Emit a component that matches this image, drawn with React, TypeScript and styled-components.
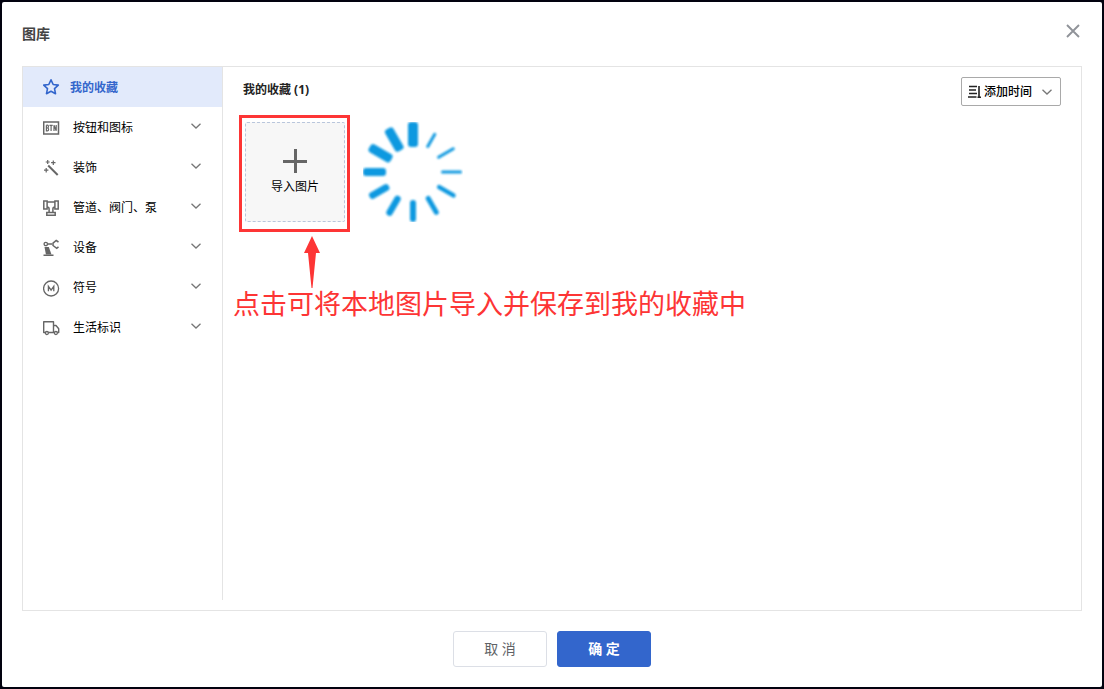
import React from "react";
import styled, { createGlobalStyle } from "styled-components";

const GlobalStyle = createGlobalStyle`
  * { box-sizing: border-box; }
  body {
    margin: 0;
    background: #02020f;
    font-family: "Noto Sans", "Noto Sans CJK SC", sans-serif;
    font-size: 12px;
    line-height: 20px;
    color: #000;
  }
  button, select { font: inherit; color: inherit; }
`;

const Screen = styled.div`
  display: flex;
  min-height: 100vh;
  padding: 2px;
`;

const Dialog = styled.section`
  flex: 1;
  display: flex;
  flex-direction: column;
  padding: 0 20px 20px;
  background: #fff;
  border-radius: 2px;
`;

const DialogHeader = styled.header`
  display: flex;
  align-items: center;
  justify-content: space-between;
  height: 64px;
`;

const DialogTitle = styled.h1`
  margin: 0;
  font-size: 14px;
  font-weight: 700;
  color: #444;
`;

const CloseButton = styled.button`
  display: flex;
  padding: 2px;
  margin-bottom: 6px;
  border: 0;
  background: none;
  color: #909399;
  cursor: pointer;
`;

const Panel = styled.div`
  flex: 1;
  display: flex;
  padding-bottom: 10px;
  border: 1px solid #e4e4e4;
`;

const Sidebar = styled.nav`
  flex: 0 0 200px;
  border-right: 1px solid #e4e4e4;
`;

const CategoryButton = styled.button<{ $active?: boolean }>`
  display: flex;
  align-items: center;
  gap: ${(p) => (p.$active ? 10 : 13)}px;
  width: 100%;
  height: 40px;
  padding: 0 20px;
  border: 0;
  text-align: left;
  cursor: pointer;
  background: ${(p) => (p.$active ? "#e2eafb" : "transparent")};
  color: ${(p) => (p.$active ? "#3366cc" : "#000")};
  font-weight: ${(p) => (p.$active ? 700 : 400)};
`;

const CategoryIcon = styled.span<{ $active?: boolean }>`
  display: flex;
  padding-top: ${(p) => (p.$active ? 0 : 2)}px;
  color: ${(p) => (p.$active ? "#3366cc" : "#666")};
`;

const CategoryLabel = styled.span`
  flex: 1;
  padding-top: 2px;
`;

const ChevronSlot = styled.span`
  display: flex;
  padding-bottom: 2px;
`;

const Main = styled.main`
  flex: 1;
  min-width: 0;
  padding: 10px 20px 0;
`;

const MainHeader = styled.div`
  display: flex;
  align-items: flex-start;
  justify-content: space-between;
`;

const SectionTitle = styled.h2`
  margin: 0;
  padding-top: 3px;
  font-size: 12px;
  font-weight: 700;
  color: #222;
`;

const SortBox = styled.label`
  display: flex;
  align-items: center;
  gap: 3px;
  width: 100px;
  height: 29px;
  padding: 0 7px 0 6px;
  border: 1px solid #a9a9a9;
  border-radius: 2px;
`;

const SortSelect = styled.select`
  flex: 1;
  min-width: 0;
  padding: 0;
  border: 0;
  appearance: none;
  background: none;
  font-weight: 500;
  line-height: 20px;
`;

const Gallery = styled.div`
  position: relative;
  display: flex;
  gap: 18px;
  padding: 16px 2px 0;
`;

const ImportTile = styled.button`
  display: flex;
  flex-direction: column;
  align-items: center;
  justify-content: center;
  gap: 4px;
  width: 100px;
  height: 100px;
  padding: 2px 0 0;
  border: 1px dashed #b9c6dc;
  border-radius: 2px;
  background: #f7f7f7;
  cursor: pointer;
`;

const Highlight = styled.div`
  position: absolute;
  top: 9px;
  left: -4px;
  width: 111px;
  height: 117px;
  border: 3px solid #fd3535;
  pointer-events: none;
`;

const Callout = styled.div`
  position: absolute;
  top: 130px;
  left: -10px;
  color: #fd3535;
  font-size: 27px;
  line-height: 32px;
  white-space: nowrap;
  pointer-events: none;
`;

const CalloutArrow = styled.svg`
  display: block;
  margin-left: 71px;
`;

const DialogFooter = styled.footer`
  display: flex;
  justify-content: center;
  gap: 10px;
  padding-top: 20px;
`;

const FooterButton = styled.button<{ $primary?: boolean }>`
  width: 94px;
  height: 36px;
  padding: 0;
  border: 1px solid ${(p) => (p.$primary ? "#3366cc" : "#dcdfe6")};
  border-radius: 3px;
  background: ${(p) => (p.$primary ? "#3366cc" : "#fff")};
  color: ${(p) => (p.$primary ? "#fff" : "#606266")};
  font-size: 14px;
  font-weight: ${(p) => (p.$primary ? 700 : 400)};
  cursor: pointer;
`;

const Chevron = () => (
  <svg width="12" height="8" viewBox="0 0 12 8" fill="none" stroke="#777" strokeWidth="1.3" aria-hidden="true">
    <path d="M1.5 1.8 6 6l4.500-4.200" />
  </svg>
);

const Icon = ({ children }: { children: React.ReactNode }) => (
  <svg width="17" height="18" viewBox="0.500 0 17 18" fill="none" stroke="currentColor" strokeWidth="1.3" aria-hidden="true">
    {children}
  </svg>
);

const StarIcon = () => (
  <Icon>
    <path strokeWidth="1.600" strokeLinejoin="round" d="m8.500 1.800 2.200 4.700 5.100.600-3.800 3.500 1 5.100-4.500-2.500-4.500 2.500 1-5.100L1.200 7.100l5.100-.600z" />
  </Icon>
);

const ButtonIcon = () => (
  <Icon>
    <rect x="1.200" y="3" width="14.800" height="12" strokeWidth="1.500" />
    <path strokeWidth="1.200" d="M3.900 6.200v5.600h1c1.600 0 1.600-2.800 0-2.800h-1M4.900 9c1.400 0 1.400-2.800 0-2.800h-1M7 6.300h3.200M8.600 6.300v5.700M11.500 12V6.200l2.200 5.600V6" />
  </Icon>
);

const WandIcon = () => (
  <Icon>
    <path strokeWidth="2" d="m5.700 6.500 9.500 9.500" />
    <path strokeWidth="1.200" d="M5.200 1v4M3.200 3h4M10.800 1.500v4.400M8.600 3.700H13M3.700 9v4.400M1.500 11.200h4.400" />
  </Icon>
);

const PipeIcon = () => (
  <Icon>
    <path strokeWidth="1.500" d="M1.300 2h3.300v8H1.300zM12.400 2h3.300v8h-3.300zM4.600 3h7.800M4.600 8c1.200 0 2 .6 2 2v3.500M12.400 8c-1.200 0-2 .6-2 2v3.500M4.300 13.500h8.400v2.800H4.300z" />
  </Icon>
);

const RobotIcon = () => (
  <Icon>
    <circle cx="3.300" cy="5" r="1.700" />
    <path fill="currentColor" stroke="none" d="M2 8h4.300l2.700 7.500H3.400z" />
    <path strokeWidth="1.500" d="M1 16.300h10M5.200 5h4.300M16 7.800l-1.800 1.500-3.700-2.800V4.200l3.200-2.700L16 3" />
  </Icon>
);

const SymbolIcon = () => (
  <Icon>
    <circle cx="8.600" cy="9.500" r="7.500" strokeWidth="1.300" />
    <path d="M5.900 12.300V7.400l2.700 3.800 2.700-3.800v4.900" />
  </Icon>
);

const TruckIcon = () => (
  <Icon>
    <path strokeWidth="1.400" strokeLinejoin="round" d="M3 13.500H1.200V2.700h9.800v10.800H5.800M11 6.500h2.500l2.700 3.200v3.800h-1.400M11 13.500h1" />
    <circle cx="4.400" cy="14" r="1.500" />
    <circle cx="13.400" cy="14" r="1.500" />
  </Icon>
);

const SortIcon = () => (
  <svg width="13" height="14" viewBox="0 0 13 14" fill="none" stroke="#222" strokeWidth="1.600" aria-hidden="true">
    <path d="M1 1.500h8M1 5h7M1 8.500h8M0 12h8.500M11 1v11.500M9.500 12.200H13" />
  </svg>
);

/* angle, inner radius, outer radius, thickness */
const spokes: [number, number, number, number][] = [
  [0, 25, 50, 10],
  [30, 28, 45, 3],
  [60, 28, 48, 3],
  [90, 28, 49, 3],
  [120, 28, 49, 4.5],
  [150, 28, 49, 5],
  [180, 28, 50, 6],
  [210, 28, 50, 6.5],
  [240, 28, 50, 7],
  [270, 27, 50, 8],
  [300, 25, 50, 9],
  [330, 25, 50, 9.5],
];

const Spinner = () => (
  <svg width="100" height="100" viewBox="-50 -50 100 100" role="img" aria-label="加载">
    <defs>
      <filter id="soften">
        <feGaussianBlur stdDeviation="1" />
      </filter>
    </defs>
    <g fill="#0e99e0" filter="url(#soften)">
      {spokes.map(([angle, inner, outer, thickness]) => (
        <rect
          key={angle}
          x={-thickness / 2}
          y={-outer}
          width={thickness}
          height={outer - inner}
          rx={Math.min(3, thickness / 2)}
          transform={`rotate(${angle})`}
        />
      ))}
    </g>
  </svg>
);

const categories = [
  { label: "按钮和图标", icon: <ButtonIcon /> },
  { label: "装饰", icon: <WandIcon /> },
  { label: "管道、阀门、泵", icon: <PipeIcon /> },
  { label: "设备", icon: <RobotIcon /> },
  { label: "符号", icon: <SymbolIcon /> },
  { label: "生活标识", icon: <TruckIcon /> },
];

export default function App() {
  return (
    <>
      <GlobalStyle />
      <Screen>
        <Dialog role="dialog" aria-labelledby="gallery-title">
          <DialogHeader>
            <DialogTitle id="gallery-title">图库</DialogTitle>
            <CloseButton type="button" aria-label="关闭">
              <svg width="14" height="14" viewBox="0 0 14 14" fill="none" stroke="currentColor" strokeWidth="1.900">
                <path d="m1 1 12 12M13 1 1 13" />
              </svg>
            </CloseButton>
          </DialogHeader>
          <Panel>
            <Sidebar>
              <CategoryButton type="button" $active>
                <CategoryIcon $active>
                  <StarIcon />
                </CategoryIcon>
                <CategoryLabel>我的收藏</CategoryLabel>
              </CategoryButton>
              {categories.map((category) => (
                <CategoryButton type="button" key={category.label}>
                  <CategoryIcon>{category.icon}</CategoryIcon>
                  <CategoryLabel>{category.label}</CategoryLabel>
                  <ChevronSlot>
                    <Chevron />
                  </ChevronSlot>
                </CategoryButton>
              ))}
            </Sidebar>
            <Main>
              <MainHeader>
                <SectionTitle>我的收藏 (1)</SectionTitle>
                <SortBox>
                  <SortIcon />
                  <SortSelect aria-label="排序" defaultValue="time">
                    <option value="time">添加时间</option>
                  </SortSelect>
                  <Chevron />
                </SortBox>
              </MainHeader>
              <Gallery>
                <ImportTile type="button">
                  <svg width="24" height="24" viewBox="0 0 24 24" stroke="#666" strokeWidth="3" aria-hidden="true">
                    <path d="M12.500 0v24M0 12.500h24" />
                  </svg>
                  <span>导入图片</span>
                </ImportTile>
                <Spinner />
                <Highlight />
                <Callout>
                  <CalloutArrow width="16" height="52" viewBox="0 0 16 52" fill="currentColor" aria-hidden="true">
                    <path d="M8 0l8 17h-4L8.500 52h-1L4 17H0z" />
                  </CalloutArrow>
                  点击可将本地图片导入并保存到我的收藏中
                </Callout>
              </Gallery>
            </Main>
          </Panel>
          <DialogFooter>
            <FooterButton type="button">取 消</FooterButton>
            <FooterButton type="button" $primary>
              确 定
            </FooterButton>
          </DialogFooter>
        </Dialog>
      </Screen>
    </>
  );
}
